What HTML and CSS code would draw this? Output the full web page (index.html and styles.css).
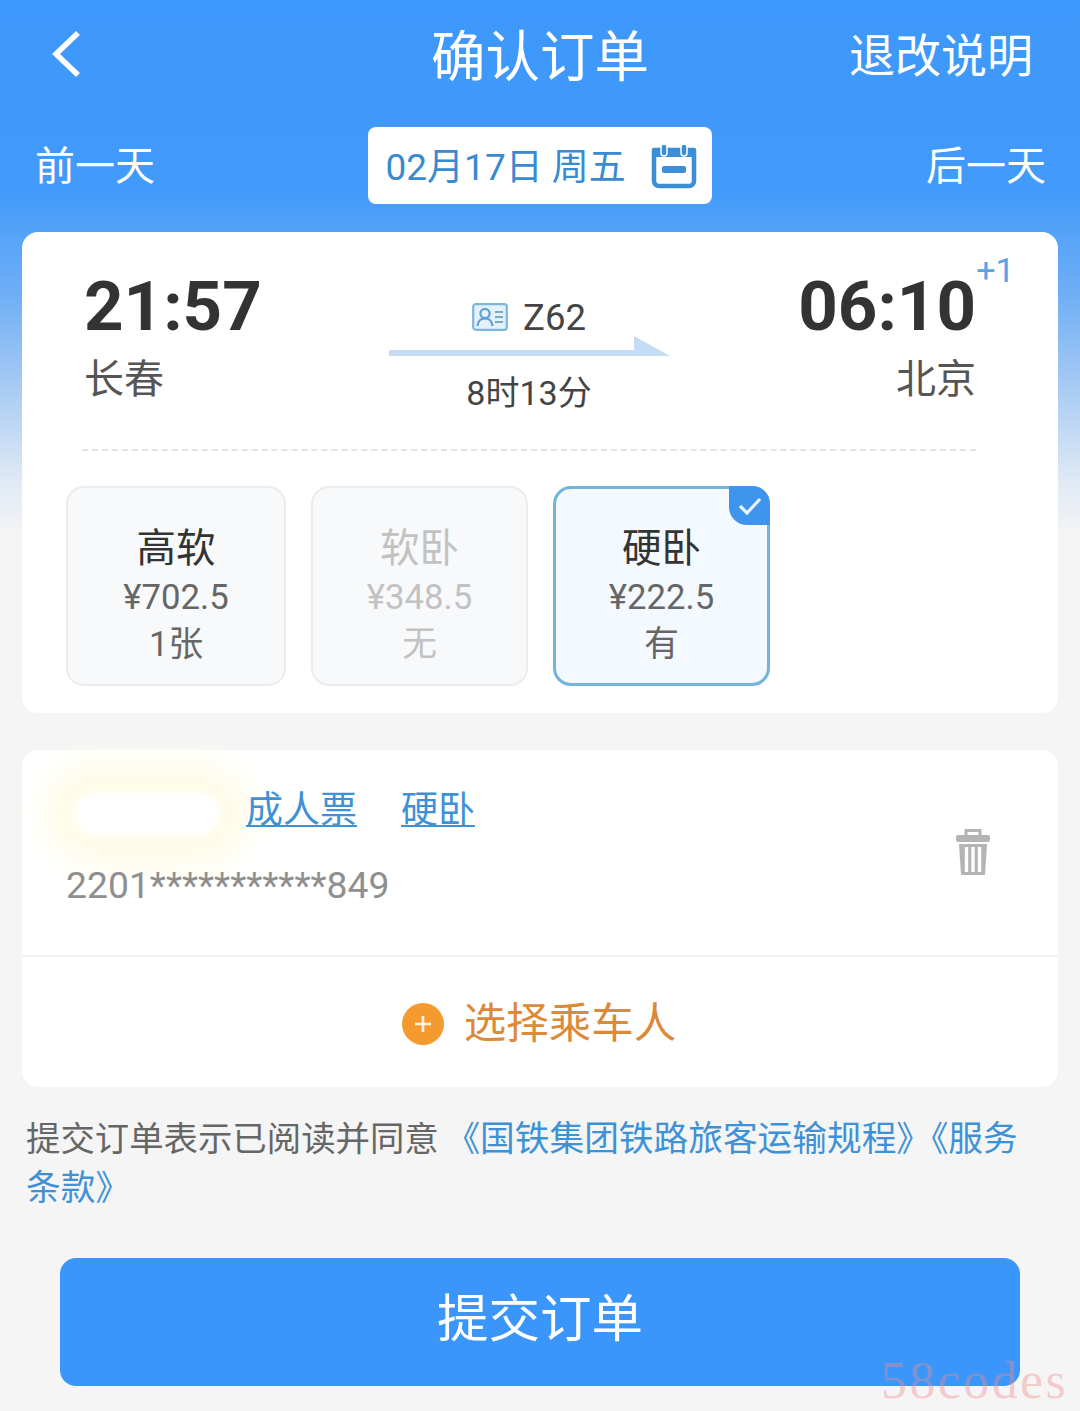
FILE: index.html
```html
<!DOCTYPE html>
<html lang="zh-CN">
<head>
<meta charset="utf-8">
<title>确认订单</title>
<link rel="stylesheet" href="styles.css">
</head>
<body>
<div class="page">
  <header class="nav">
    <svg class="back" width="34" height="48" viewBox="0 0 34 48"><path d="M28 3 L6 24 L28 45" fill="none" stroke="#fff" stroke-width="5.5" stroke-linejoin="miter"/></svg>
    <h1 class="title">确认订单</h1>
    <span class="rules">退改说明</span>
  </header>
  <section class="dates">
    <span class="day">前一天</span>
    <div class="datebox">
      <span class="datetext">02月17日 周五</span>
      <svg class="cal" width="46" height="46" viewBox="0 0 46 46">
        <path d="M3 7 H43 V38 a5 5 0 0 1 -5 5 H8 a5 5 0 0 1 -5 -5 Z" fill="none" stroke="#3a8fd8" stroke-width="4.5" stroke-linejoin="round"/>
        <path d="M3 8 H43 V14 H3 Z" fill="#3a8fd8"/>
        <rect x="10" y="1" width="6" height="12" rx="3" fill="#3a8fd8" stroke="#fff" stroke-width="1.5"/>
        <rect x="30" y="1" width="6" height="12" rx="3" fill="#3a8fd8" stroke="#fff" stroke-width="1.5"/>
        <rect x="11" y="23" width="24" height="7" rx="2" fill="#3a8fd8"/>
      </svg>
    </div>
    <span class="day">后一天</span>
  </section>

  <section class="card trip">
    <div class="route">
      <div class="stop">
        <div class="time">21:57</div>
        <div class="city">长春</div>
      </div>
      <div class="mid">
        <div class="train">
          <svg width="36" height="28" viewBox="0 0 36 28">
            <rect x="1.2" y="1.2" width="33.6" height="25.6" rx="2.5" fill="#e3f1fb" stroke="#7fb6dc" stroke-width="2.2"/>
            <circle cx="13" cy="10.5" r="4.6" fill="none" stroke="#5f9fd2" stroke-width="2.2"/>
            <path d="M5.5 23 C6 17 9 15.5 13 15.5 C17 15.5 20 17 20.5 23" fill="none" stroke="#5f9fd2" stroke-width="2.2"/>
            <path d="M23 9 H31 M23 14 H31 M23 19 H31" stroke="#7aa9c8" stroke-width="2"/>
          </svg>
          <span class="no">Z62</span>
        </div>
        <svg class="arrow" width="281" height="22" viewBox="0 0 281 22"><path d="M0 15 H245 V1 L281 21 H0 Z" fill="#c5dcf5"/></svg>
        <div class="dur">8时13分</div>
      </div>
      <div class="stop end">
        <div class="time">06:10<sup class="plus">+1</sup></div>
        <div class="city">北京</div>
      </div>
    </div>
    <div class="dash"></div>
    <div class="seats">
      <div class="seat seat-a"><b>高软</b><span>¥702.5</span><span>1张</span></div>
      <div class="seat seat-b off"><b>软卧</b><span>¥348.5</span><span>无</span></div>
      <div class="seat seat-c on">
        <i class="tick"><svg width="26" height="20" viewBox="0 0 26 20"><path d="M3 10 L10 17 L23 3" fill="none" stroke="#e8f4ff" stroke-width="3.2"/></svg></i>
        <b>硬卧</b><span>¥222.5</span><span>有</span>
      </div>
    </div>
  </section>

  <section class="card people">
    <div class="person">
      <div class="smudge"></div>
      <div class="pinfo">
        <div class="tags"><span class="tag">成人票</span><span class="tag">硬卧</span></div>
        <div class="idno">2201***********849</div>
      </div>
      <svg class="trash" width="36" height="50" viewBox="0 0 36 50">
        <path d="M11 7 V2.5 H25 V7" fill="none" stroke="#b4b4b4" stroke-width="3"/>
        <rect x="1" y="7" width="34" height="7" rx="2" fill="#b4b4b4"/>
        <path d="M4 16 H32 L30 47 H6 Z" fill="#b4b4b4"/>
        <path d="M11.5 19 V44 M18 19 V44 M24.5 19 V44" stroke="#fff" stroke-width="3.4"/>
      </svg>
    </div>
    <div class="add">
      <i class="addicon"><svg width="20" height="20" viewBox="0 0 20 20"><path d="M10 2 V18 M2 10 H18" stroke="#fff3e0" stroke-width="2.6"/></svg></i>
      <span class="addtext">选择乘车人</span>
    </div>
  </section>

  <p class="terms">提交订单表示已阅读并同意 <a>《国铁集团铁路旅客运输规程》《服务</a><br><a class="cont">条款》</a></p>
  <button class="submit">提交订单</button>
  <div class="mark">58codes</div>
</div>
</body>
</html>
```

FILE: styles.css
```css
* { box-sizing: border-box; }
html, body { margin: 0; padding: 0; }
body {
  font-family: "Noto Sans CJK SC", "Noto Sans", sans-serif;
  background: #f5f5f5;
}
.page {
  position: relative;
  width: 1080px;
  height: 1411px;
  overflow: hidden;
  padding: 0 22px;
  background: linear-gradient(180deg, #3d98fb 0, #429afa 190px, #72b0f6 300px, #a3c9f3 380px, #dfe9f5 480px, #f5f5f5 535px);
}
.nav {
  position: relative;
  height: 108px;
  display: flex;
  align-items: center;
  justify-content: space-between;
  padding: 0 25px 0 28px;
  color: #fff;
}
.back { display: block; }
.title {
  position: absolute;
  left: 0;
  right: 0;
  top: 15px;
  margin: 0;
  text-align: center;
  font-size: 54.5px;
  line-height: 76px;
  font-weight: 400;
}
.rules { font-size: 46px; line-height: 64px; margin-bottom: 4px; }
.dates {
  height: 124px;
  padding: 19px 12px 0 13px;
  display: flex;
  justify-content: space-between;
  color: #fff;
}
.day { font-size: 40px; line-height: 72px; }
.datebox {
  width: 344px;
  height: 77px;
  margin-left: -2px;
  background: #fff;
  border-radius: 8px;
  display: flex;
  align-items: center;
  padding: 0 0 0 18px;
  gap: 25px;
}
.datetext {
  font-size: 37px;
  line-height: 50px;
  color: #3a8ad0;
  white-space: nowrap;
  width: 240px;
  margin-top: 5px;
  font-family: Roboto, "Noto Sans CJK SC", sans-serif;
}
.cal { display: block; flex: none; }
.card { background: #fff; border-radius: 16px; }
.trip { height: 481px; padding: 0 44px; }
.route {
  height: 217px;
  display: flex;
  justify-content: space-between;
  padding: 0 38px 0 18px;
}
.stop { padding-top: 35px; }
.stop.end { text-align: right; }
.time {
  position: relative;
  font-family: Roboto, sans-serif;
  font-weight: 700;
  font-size: 69px;
  line-height: 80px;
  color: #333;
}
.plus {
  position: absolute;
  left: 178px;
  top: -19px;
  font-size: 34px;
  line-height: 44px;
  font-weight: 400;
  color: #5aa2e6;
}
.city { font-size: 40px; line-height: 52px; color: #555; margin-top: 3px; }
.mid { width: 282px; margin-top: 64px; margin-left: -2px; display: flex; flex-direction: column; align-items: center; }
.train { display: flex; align-items: center; gap: 15px; height: 42px; margin-bottom: 2px; }
.no { font-family: Roboto, sans-serif; font-size: 36.5px; color: #444; }
.arrow { display: block; margin-top: -5px; flex: none; }
.dur { font-family: Roboto, "Noto Sans CJK SC", sans-serif; font-size: 34px; line-height: 48px; color: #444; margin-top: 12px; }
.dash { border-top: 2px dashed #e3e3e3; margin: 0 38px 0 16px; }
.seats { display: flex; gap: 25px; padding-top: 35px; }
.seat {
  position: relative;
  height: 200px;
  border-radius: 18px;
  border: 2px solid #ececec;
  background: #f8f9fa;
  display: flex;
  flex-direction: column;
  align-items: center;
  padding-top: 29px;
  color: #666;
  font-family: Roboto, "Noto Sans CJK SC", sans-serif;
  font-size: 34.7px;
  line-height: 47px;
}
.seat-a { width: 220px; }
.seat-b { width: 217px; }
.seat-c { width: 217px; padding-top: 28px; }
.seat b { font-family: "Noto Sans CJK SC", sans-serif; font-weight: 400; font-size: 39.5px; line-height: 55px; margin-bottom: 2px; color: #333; }
.off, .off b { color: #c2c2c2; }
.on { border: 3px solid #73b4dc; background: #f3f9fe; }
.tick {
  position: absolute;
  right: -3px;
  top: -3px;
  width: 41px;
  height: 39px;
  background: #3f95ee;
  border-radius: 0 18px 0 18px;
  display: flex;
  align-items: center;
  justify-content: center;
}
.people { margin-top: 37px; height: 337px; }
.person {
  position: relative;
  height: 207px;
  border-bottom: 2px solid #f2f2f2;
  display: flex;
  justify-content: space-between;
  padding: 29px 67px 0 44px;
}
.smudge {
  position: absolute;
  left: 52px;
  top: 42px;
  width: 146px;
  height: 44px;
  background: #fff;
  border-radius: 22px;
  box-shadow: 0 0 30px 30px #fffce8;
  filter: blur(3px);
}
.pinfo { position: relative; }
.tags { display: flex; gap: 44px; padding-left: 180px; }
.tag {
  font-size: 37px;
  line-height: 56px;
  color: #3f91d6;
  border-bottom: 2px solid #3f91d6;
  height: 48px;
  overflow: visible;
}
.idno {
  font-family: Roboto, sans-serif;
  font-size: 37.3px;
  line-height: 50px;
  color: #8f8f8f;
  margin-top: 33px;
}
.trash { display: block; margin-top: 49px; }
.add {
  height: 128px;
  display: flex;
  align-items: center;
  justify-content: center;
  gap: 20px;
  font-size: 42.5px;
  color: #dc8a3a;
  padding-right: 2px;
}
.addtext { margin-top: -4px; }
.addicon {
  width: 42px;
  height: 42px;
  border-radius: 50%;
  background: #f59a2e;
  display: flex;
  align-items: center;
  justify-content: center;
  margin-top: 6px;
}
.terms {
  margin: 25px 0 0;
  padding: 0 4px;
  font-size: 34.4px;
  line-height: 49px;
  color: #666;
}
.terms a { color: #3f91d6; font-size: 34.7px; margin-left: -1px; }
.terms a.cont { margin-left: 0; }
.submit {
  display: block;
  margin: 48px 16px 0 38px;
  width: 960px;
  height: 128px;
  border: 0;
  border-radius: 16px;
  background: #3b96fb;
  color: #fff;
  padding: 0 0 16px;
  font-family: "Noto Sans CJK SC", sans-serif;
  font-size: 51.5px;
}
.mark {
  position: absolute;
  left: 881px;
  top: 1353px;
  font-family: "Liberation Serif", serif;
  font-size: 52px;
  line-height: 56px;
  letter-spacing: 2.4px;
  color: rgba(240, 140, 140, 0.4);
}
```
